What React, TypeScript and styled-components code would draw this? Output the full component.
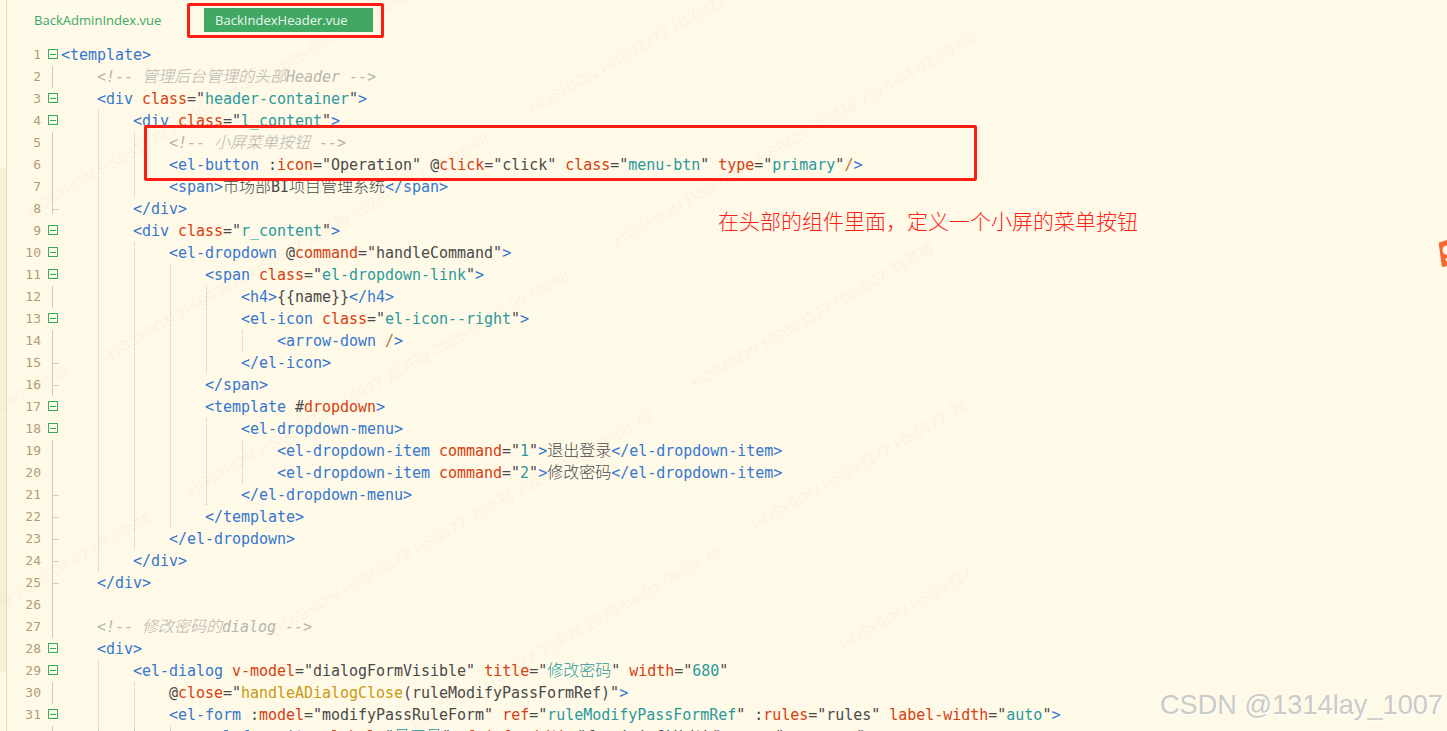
import React from "react";
import styled, { createGlobalStyle } from "styled-components";

const Global = createGlobalStyle`
  html, body { margin: 0; padding: 0; height: 731px; overflow: hidden; background: #fff9e8; }
  #root { height: 731px; }
`;

const Page = styled.div`
  position: relative;
  display: flex;
  width: 1447px;
  height: 731px;
  overflow: hidden;
  background: #fff9e8;
`;

const Strip = styled.div`
  flex: 0 0 6px;
  border-right: 1px solid #e9dcab;
  background: linear-gradient(
    to bottom,
    #fff9e8 0,
    #fff9e8 168px,
    #f8f1da 168px,
    #f8f1da 672px,
    #fff9e8 672px
  );
`;

const Editor = styled.div`
  position: relative;
  flex: 1;
  display: flex;
  flex-direction: column;
  min-width: 0;
`;

const TabBar = styled.div`
  flex: 0 0 44px;
  box-sizing: border-box;
  display: flex;
  align-items: flex-start;
  padding: 8px 0 0 27px;
`;

const Tab = styled.div<{ $active?: boolean }>`
  box-sizing: border-box;
  height: 24px;
  line-height: 24px;
  font-family: "Open Sans", "Noto Sans", sans-serif;
  font-size: 13.05px;
  white-space: nowrap;
  color: ${(p) => (p.$active ? "#eaf6ee" : "#3ba866")};
  background: ${(p) => (p.$active ? "#41a863" : "transparent")};
  width: ${(p) => (p.$active ? "169px" : "170px")};
  padding-left: ${(p) => (p.$active ? "11px" : "0")};
`;

const Row = styled.div`
  display: flex;
  height: 22px;
  flex: 0 0 22px;
  line-height: 22px;
`;

const LineNo = styled.div`
  flex: 0 0 34px;
  text-align: right;
  font-family: "DejaVu Sans Mono", monospace;
  font-size: 13px;
  color: #b39c74;
`;

const FoldCell = styled.div`
  flex: 0 0 20px;
  box-sizing: border-box;
  display: flex;
  align-items: center;
  padding-left: 7px;
`;

const FoldBox = styled.div`
  box-sizing: border-box;
  display: flex;
  align-items: center;
  justify-content: center;
  width: 10px;
  height: 10px;
  margin-top: -2px;
  border: 1px solid #35ad5d;
  &::after {
    content: "";
    width: 6px;
    height: 1px;
    background: #35ad5d;
  }
`;

const FoldLine = styled.div<{ $tick?: boolean; $short?: boolean }>`
  position: relative;
  align-self: flex-start;
  margin-left: 4px;
  height: ${(p) => (p.$short ? "16px" : "22px")};
  width: 1px;
  background: #cdc8b8;
  &::after {
    content: "";
    display: ${(p) => (p.$tick ? "block" : "none")};
    position: absolute;
    left: 1px;
    top: 11px;
    width: 6px;
    height: 1px;
    background: #d5d0bf;
  }
`;

function guideLayers(depth: number): string {
  const levels = Array.from({ length: Math.max(depth - 1, 0) }, (_, g) => g + 1);
  if (!levels.length) return "";
  const images = levels.map(() => "linear-gradient(to bottom, #c4c1b4 50%, transparent 50%)").join(", ");
  const positions = levels.map((l) => `${l * 36 + 1}px 0`).join(", ");
  return `
    background-image: ${images};
    background-position: ${positions};
    background-size: 1px 2px;
    background-repeat: repeat-y;
  `;
}

const Code = styled.div<{ $depth: number }>`
  flex: 1;
  white-space: pre;
  font-family: "DejaVu Sans Mono", "Noto Sans CJK SC", monospace;
  font-size: 15px;
  letter-spacing: -0.03px;
  color: #4a4a4a;
  ${(p) => guideLayers(p.$depth)}
`;

const TOK_COLORS: Record<string, string> = {
  tag: "#3577cf",
  slash: "#b5793a",
  attr: "#d6400f",
  str: "#2a9a9c",
  dyn: "#4a4a4a",
  gold: "#c99a12",
  text: "#4a4a4a",
};

const Tok = styled.span<{ $kind: string }>`
  color: ${(p) => TOK_COLORS[p.$kind]};
`;

const Comment = styled.span`
  color: #b7b5ad;
  font-style: italic;
`;

const Cjk = styled.span`
  font-family: "Noto Sans CJK SC", sans-serif;
  font-size: 16px;
  font-weight: 300;
  letter-spacing: 0;
  line-height: 1;
`;

const Watermarks = styled.div`
  position: absolute;
  inset: 0;
  pointer-events: none;
`;

const Mark = styled.span<{ $x: number; $y: number }>`
  position: absolute;
  left: ${(p) => p.$x}px;
  top: ${(p) => p.$y - 20}px;
  height: 20px;
  line-height: 20px;
  white-space: nowrap;
  transform-origin: 0 100%;
  transform: rotate(-29.8deg);
  font-family: "Liberation Sans", "Noto Sans CJK SC", sans-serif;
  font-size: 16.5px;
  font-weight: 700;
  color: rgba(110, 90, 40, 0.045);
`;

const Frame = styled.div<{ $x: number; $y: number; $w: number; $h: number }>`
  position: absolute;
  left: ${(p) => p.$x}px;
  top: ${(p) => p.$y}px;
  width: ${(p) => p.$w}px;
  height: ${(p) => p.$h}px;
  box-sizing: border-box;
  border: 3px solid #fe1d12;
  border-radius: 2px;
`;

const Note = styled.div`
  position: absolute;
  left: 718px;
  top: 206px;
  line-height: 28px;
  font-family: "Noto Sans CJK SC", sans-serif;
  font-size: 21px;
  font-weight: 300;
  color: #fb2318;
  white-space: nowrap;
`;

const Sticker = styled.svg`
  position: absolute;
  left: 1437px;
  top: 238px;
`;

const Brand = styled.div`
  position: absolute;
  right: 4px;
  top: 688px;
  line-height: 34px;
  font-family: "Liberation Sans", sans-serif;
  font-size: 27.2px;
  color: #cbcbc8;
  text-shadow: 1px 1px 1px rgba(255, 255, 255, 0.9);
  white-space: nowrap;
`;

type Fold = "box" | "line" | "tick" | "short" | "none";
type Line = [number, string, Fold];

const LINES: Line[] = [
  [0, `<template>`, "box"],
  [4, `<!-- 管理后台管理的头部Header -->`, "line"],
  [4, `<div class="header-container">`, "box"],
  [8, `<div class="l_content">`, "box"],
  [12, `<!-- 小屏菜单按钮 -->`, "line"],
  [12, `<el-button :icon="Operation" @click="click" class="menu-btn" type="primary"/>`, "line"],
  [12, `<span>市场部BI项目管理系统</span>`, "line"],
  [8, `</div>`, "short"],
  [8, `<div class="r_content">`, "box"],
  [12, `<el-dropdown @command="handleCommand">`, "box"],
  [16, `<span class="el-dropdown-link">`, "box"],
  [20, `<h4>{{name}}</h4>`, "line"],
  [20, `<el-icon class="el-icon--right">`, "box"],
  [24, `<arrow-down />`, "line"],
  [20, `</el-icon>`, "tick"],
  [16, `</span>`, "tick"],
  [16, `<template #dropdown>`, "box"],
  [20, `<el-dropdown-menu>`, "box"],
  [24, `<el-dropdown-item command="1">退出登录</el-dropdown-item>`, "line"],
  [24, `<el-dropdown-item command="2">修改密码</el-dropdown-item>`, "line"],
  [20, `</el-dropdown-menu>`, "tick"],
  [16, `</template>`, "tick"],
  [12, `</el-dropdown>`, "tick"],
  [8, `</div>`, "tick"],
  [4, `</div>`, "tick"],
  [0, ``, "line"],
  [4, `<!-- 修改密码的dialog -->`, "line"],
  [4, `<div>`, "box"],
  [8, `<el-dialog v-model="dialogFormVisible" title="修改密码" width="680"`, "box"],
  [12, `@close="handleADialogClose(ruleModifyPassFormRef)">`, "line"],
  [12, `<el-form :model="modifyPassRuleForm" ref="ruleModifyPassFormRef" :rules="rules" label-width="auto">`, "box"],
  [16, `<el-form-item label="员工号" :label-width="formLabelWidth" prop="username">`, "line"],
];

const FULL = "HOSHION HS003372 HS0627 刘洪裕 2026-04-01 09:08:48";

const MARKS: [number, number, string][] = [
  [-127, 77, FULL],
  [33, 220, FULL],
  [113, 363, FULL],
  [193, 500, FULL],
  [277, 640, FULL],
  [346, 775, FULL],
  [-389, 465, FULL],
  [-309, 595, FULL],
  [-225, 742, FULL],
  [535, 118, FULL],
  [620, 250, "HOSHION HS003372 HS0627 刘洪裕 2026-04-01 09:08:"],
  [697, 393, "HOSHION HS003372 HS0627 刘洪裕"],
  [757, 535, "HOSHION HS003372 HS0627 刘"],
  [845, 655, "HOSHION HS00337"],
];

function cjkParts(text: string): React.ReactNode[] {
  return text
    .split(/([\u3000-\u9fff]+)/)
    .filter(Boolean)
    .map((part, i) =>
      /[\u3000-\u9fff]/.test(part) ? <Cjk key={i}>{part}</Cjk> : part
    );
}

function renderCode(src: string): React.ReactNode {
  if (src.startsWith("<!--")) return <Comment>{cjkParts(src)}</Comment>;
  const out: React.ReactNode[] = [];
  let k = 0;
  const re = /<\/?[\w-]+|\/>|>|([:@]?)([\w-]+)=("[^"]*")|#([\w-]+)|\s+|[^<>\s]+/g;
  let m: RegExpExecArray | null;
  while ((m = re.exec(src))) {
    const t = m[0];
    if (m[2]) {
      const dynamic = m[1] !== "" || m[2] === "v-model";
      const inner = m[3].slice(1, -1);
      out.push(<Tok key={k++} $kind="dyn">{m[1]}</Tok>);
      out.push(<Tok key={k++} $kind="attr">{m[2]}</Tok>);
      out.push(<Tok key={k++} $kind="dyn">{`="`}</Tok>);
      if (m[2] === "close") {
        out.push(<Tok key={k++} $kind="gold">handleADialogClose</Tok>);
        out.push(<Tok key={k++} $kind="dyn">(ruleModifyPassFormRef)</Tok>);
      } else {
        out.push(
          <Tok key={k++} $kind={dynamic ? "dyn" : "str"}>
            {cjkParts(inner)}
          </Tok>
        );
      }
      out.push(<Tok key={k++} $kind="dyn">{`"`}</Tok>);
    } else if (m[4]) {
      out.push(<Tok key={k++} $kind="dyn">#</Tok>);
      out.push(<Tok key={k++} $kind="attr">{m[4]}</Tok>);
    } else if (t === "/>") {
      out.push(<Tok key={k++} $kind="slash">/</Tok>);
      out.push(<Tok key={k++} $kind="tag">{">"}</Tok>);
    } else if (t === ">" || t.startsWith("<")) {
      out.push(<Tok key={k++} $kind="tag">{t}</Tok>);
    } else {
      out.push(<Tok key={k++} $kind="text">{cjkParts(t)}</Tok>);
    }
  }
  return out;
}

function FoldMark({ kind }: { kind: Fold }) {
  if (kind === "box") return <FoldBox />;
  if (kind === "line") return <FoldLine />;
  if (kind === "tick") return <FoldLine $tick />;
  if (kind === "short") return <FoldLine $tick $short />;
  return null;
}

export default function App() {
  return (
    <Page>
      <Global />
      <Watermarks>
        {MARKS.map(([x, y, text], i) => (
          <Mark key={i} $x={x} $y={y}>
            {text}
          </Mark>
        ))}
      </Watermarks>
      <Strip />
      <Editor>
        <TabBar>
          <Tab>BackAdminIndex.vue</Tab>
          <Tab $active>BackIndexHeader.vue</Tab>
        </TabBar>
        {LINES.map(([indent, src, fold], i) => (
          <Row key={i}>
            <LineNo>{i + 1}</LineNo>
            <FoldCell>
              <FoldMark kind={fold} />
            </FoldCell>
            <Code $depth={Math.floor(indent / 4)}>
              {" ".repeat(indent)}
              {renderCode(src)}
            </Code>
          </Row>
        ))}
      </Editor>
      <Frame $x={187} $y={3} $w={197} $h={35} />
      <Frame $x={144} $y={125} $w={833} $h={56} />
      <Note>在头部的组件里面，定义一个小屏的菜单按钮</Note>
      <Sticker width="10" height="32" viewBox="0 0 10 32">
        <path d="M2 4.5 L10 2 L10 28 L6 29 Q5 29 4.8 28 L1.8 6 Q1.7 5 2 4.5 Z" fill="#f8672f" />
        <circle cx="10" cy="12" r="4.5" fill="#fff9f0" />
        <circle cx="10" cy="21.5" r="1.6" fill="#fff9f0" />
      </Sticker>
      <Brand>CSDN @1314lay_1007</Brand>
    </Page>
  );
}
